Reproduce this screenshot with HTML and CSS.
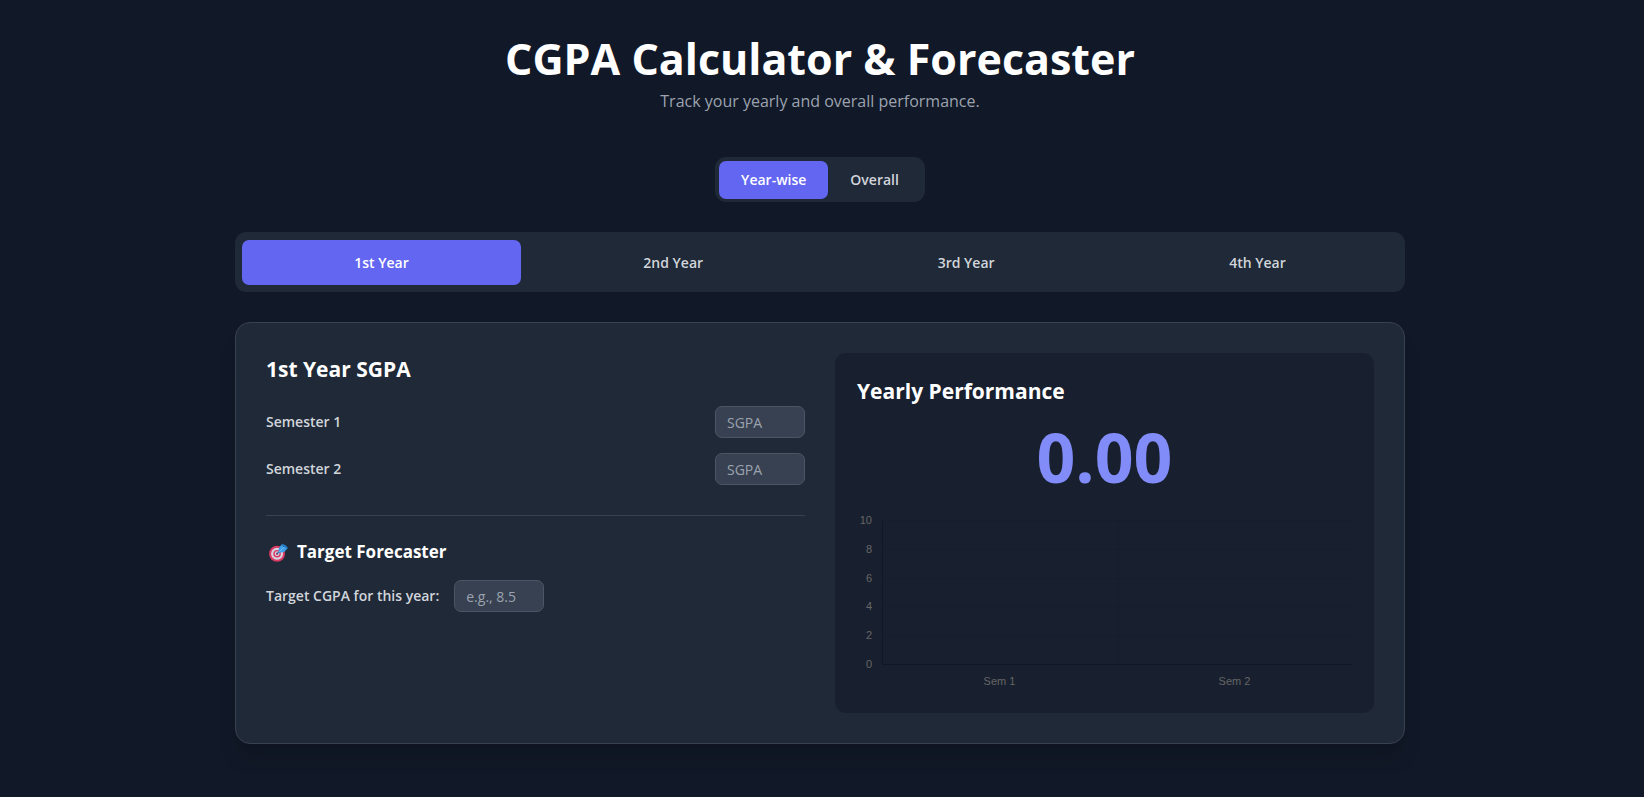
FILE: index.html
```html
<!DOCTYPE html>
<html lang="en">
<head>
<meta charset="utf-8">
<meta name="viewport" content="width=device-width, initial-scale=1">
<title>CGPA Calculator &amp; Forecaster</title>
<link rel="stylesheet" href="styles.css">
</head>
<body>
<div class="container">
  <header class="header">
    <h1 class="title">CGPA Calculator &amp; Forecaster</h1>
    <p class="subtitle">Track your yearly and overall performance.</p>
  </header>

  <nav class="modes">
    <button type="button" class="mode active">Year-wise</button>
    <button type="button" class="mode">Overall</button>
  </nav>

  <nav class="years">
    <button type="button" class="year active">1st Year</button>
    <button type="button" class="year">2nd Year</button>
    <button type="button" class="year">3rd Year</button>
    <button type="button" class="year">4th Year</button>
  </nav>

  <main class="card">
    <section class="inputs">
      <h2 class="heading">1st Year SGPA</h2>
      <div class="rows">
        <div class="row">
          <label class="label" for="sem1">Semester 1</label>
          <input class="field" id="sem1" type="text" inputmode="decimal" placeholder="SGPA">
        </div>
        <div class="row">
          <label class="label" for="sem2">Semester 2</label>
          <input class="field" id="sem2" type="text" inputmode="decimal" placeholder="SGPA">
        </div>
      </div>
      <div class="forecast">
        <h3 class="subheading">
          <svg class="target" viewBox="0 0 20 20" aria-hidden="true">
            <circle cx="8.5" cy="11.3" r="8.4" fill="#d93a63"/>
            <circle cx="8.5" cy="11.3" r="6.3" fill="#d9d3e2"/>
            <circle cx="8.5" cy="11.3" r="4" fill="#d93a63"/>
            <circle cx="8.5" cy="11.3" r="2.5" fill="#d9d3e2"/>
            <circle cx="8.5" cy="11.3" r="1.2" fill="#b92d55"/>
            <path d="M8.7 11.2 13 7" stroke="#1b6fb8" stroke-width="1.3" stroke-linecap="round"/>
            <path d="M10 10.2 10.3 5.5 13.9 .8 14.9 4 20 5 16 9.6Z" fill="#3d9fea"/>
            <path d="M13.9 .4 15.6 4.2 20 5 17.6 2.6Z" fill="#2381d6"/>
            <path d="M11 9.2 16 4.1" stroke="#7cc4f5" stroke-width="1"/>
          </svg>
          Target Forecaster
        </h3>
        <div class="goal">
          <label class="label" for="goal">Target CGPA for this year:</label>
          <input class="field" id="goal" type="text" inputmode="decimal" placeholder="e.g., 8.5">
        </div>
      </div>
    </section>

    <section class="panel">
      <h2 class="heading">Yearly Performance</h2>
      <p class="score">0.00</p>
      <div class="chart">
        <div class="scale"><span>10</span><span>8</span><span>6</span><span>4</span><span>2</span><span>0</span></div>
        <div class="plot">
          <div class="band"></div>
          <div class="band"></div>
          <div class="band"></div>
          <div class="band"></div>
          <div class="band"></div>
          <div class="columns"><div></div><div></div></div>
        </div>
        <div class="names"><span>Sem 1</span><span>Sem 2</span></div>
      </div>
    </section>
  </main>
</div>
</body>
</html>
```
FILE: styles.css
```css
* {
  box-sizing: border-box;
}

body {
  margin: 0;
  padding-right: 4px;
  background: #111827;
  color: #d1d5db;
  font-family: "Open Sans", "Noto Sans", sans-serif;
  font-size: 14px;
  line-height: 22px;
}

h1, h2, h3, p {
  margin: 0;
}

button, input {
  font: inherit;
}

.container {
  max-width: 1200px;
  margin: 0 auto;
  padding: 30px 15px;
}

.header {
  margin-bottom: 43px;
  text-align: center;
}

.title {
  color: #fff;
  font-size: 43px;
  font-weight: 700;
  line-height: 58px;
}

.subtitle {
  color: #9ca3af;
  font-size: 16px;
  line-height: 26px;
}

.modes {
  display: flex;
  width: fit-content;
  margin: 0 auto 30px;
  padding: 4px 4px 3px;
  border-radius: 11px;
  background: #1f2937;
}

.mode, .year {
  border: 0;
  border-radius: 7px;
  background: none;
  color: #d1d5db;
  font-weight: 600;
  line-height: 22px;
}

.mode {
  padding: 8px 22px;
}

.active {
  background: #6366f1;
  color: #fff;
}

.years {
  display: flex;
  gap: 10px;
  margin-bottom: 30px;
  padding: 8px 7px 7px;
  border-radius: 11px;
  background: #1f2937;
}

.year {
  flex: 1 1 auto;
  padding: 12px 7px 11px;
}

.card {
  display: grid;
  grid-template-columns: 1fr 1fr;
  gap: 30px;
  padding: 30px;
  border: 1px solid #374151;
  border-radius: 15px;
  background: #1f2937;
  box-shadow: 0 20px 25px -5px rgba(0, 0, 0, .1), 0 8px 10px -6px rgba(0, 0, 0, .1);
}

.heading {
  color: #fff;
  font-size: 21px;
  font-weight: 700;
  line-height: 32px;
}

.rows {
  display: grid;
  gap: 15px;
  margin-top: 21px;
}

.row {
  display: flex;
  align-items: center;
  justify-content: space-between;
}

.label {
  font-weight: 600;
}

.field {
  width: 90px;
  height: 32px;
  padding: 0 11px;
  border: 1px solid #4b5563;
  border-radius: 7px;
  background: #374151;
  color: #fff;
}

.field::placeholder {
  color: #9ca3af;
  opacity: 1;
}

.forecast {
  margin-top: 30px;
  padding-top: 22px;
  border-top: 1px solid #374151;
}

.subheading {
  display: flex;
  align-items: center;
  gap: 9px;
  padding-left: 3px;
  color: #fff;
  font-size: 17px;
  font-weight: 700;
  line-height: 28px;
}

.target {
  width: 19px;
  height: 19px;
}

.goal {
  display: flex;
  align-items: center;
  gap: 15px;
  margin-top: 14px;
}

.panel {
  padding: 22px 22px 25px;
  border-radius: 11px;
  background: rgba(17, 24, 39, .5);
}

.score {
  margin-top: 16px;
  color: #818cf8;
  font-size: 68px;
  font-weight: 700;
  line-height: 68px;
  text-align: center;
}

.chart {
  display: grid;
  grid-template-columns: 15px 1fr;
  column-gap: 10px;
  margin-top: 22px;
  color: #666;
  font-family: "Liberation Sans", Arial, sans-serif;
  font-size: 11px;
  line-height: 14px;
}

.scale {
  display: flex;
  flex-direction: column;
  justify-content: space-between;
  text-align: right;
}

.plot {
  display: grid;
  grid-auto-rows: 1fr;
  position: relative;
  height: 145px;
  margin: 7px 0 6px;
  border-bottom: 1px solid rgba(0, 0, 0, .25);
  border-left: 1px solid rgba(0, 0, 0, .25);
}

.band {
  border-top: 1px solid rgba(0, 0, 0, .06);
}

.columns {
  display: grid;
  grid-template-columns: 1fr 1fr;
  position: absolute;
  inset: 0;
}

.columns div + div {
  border-left: 1px solid rgba(0, 0, 0, .06);
}

.names {
  display: grid;
  grid-column: 2;
  grid-template-columns: 1fr 1fr;
  margin-top: 3px;
  text-align: center;
}
```
